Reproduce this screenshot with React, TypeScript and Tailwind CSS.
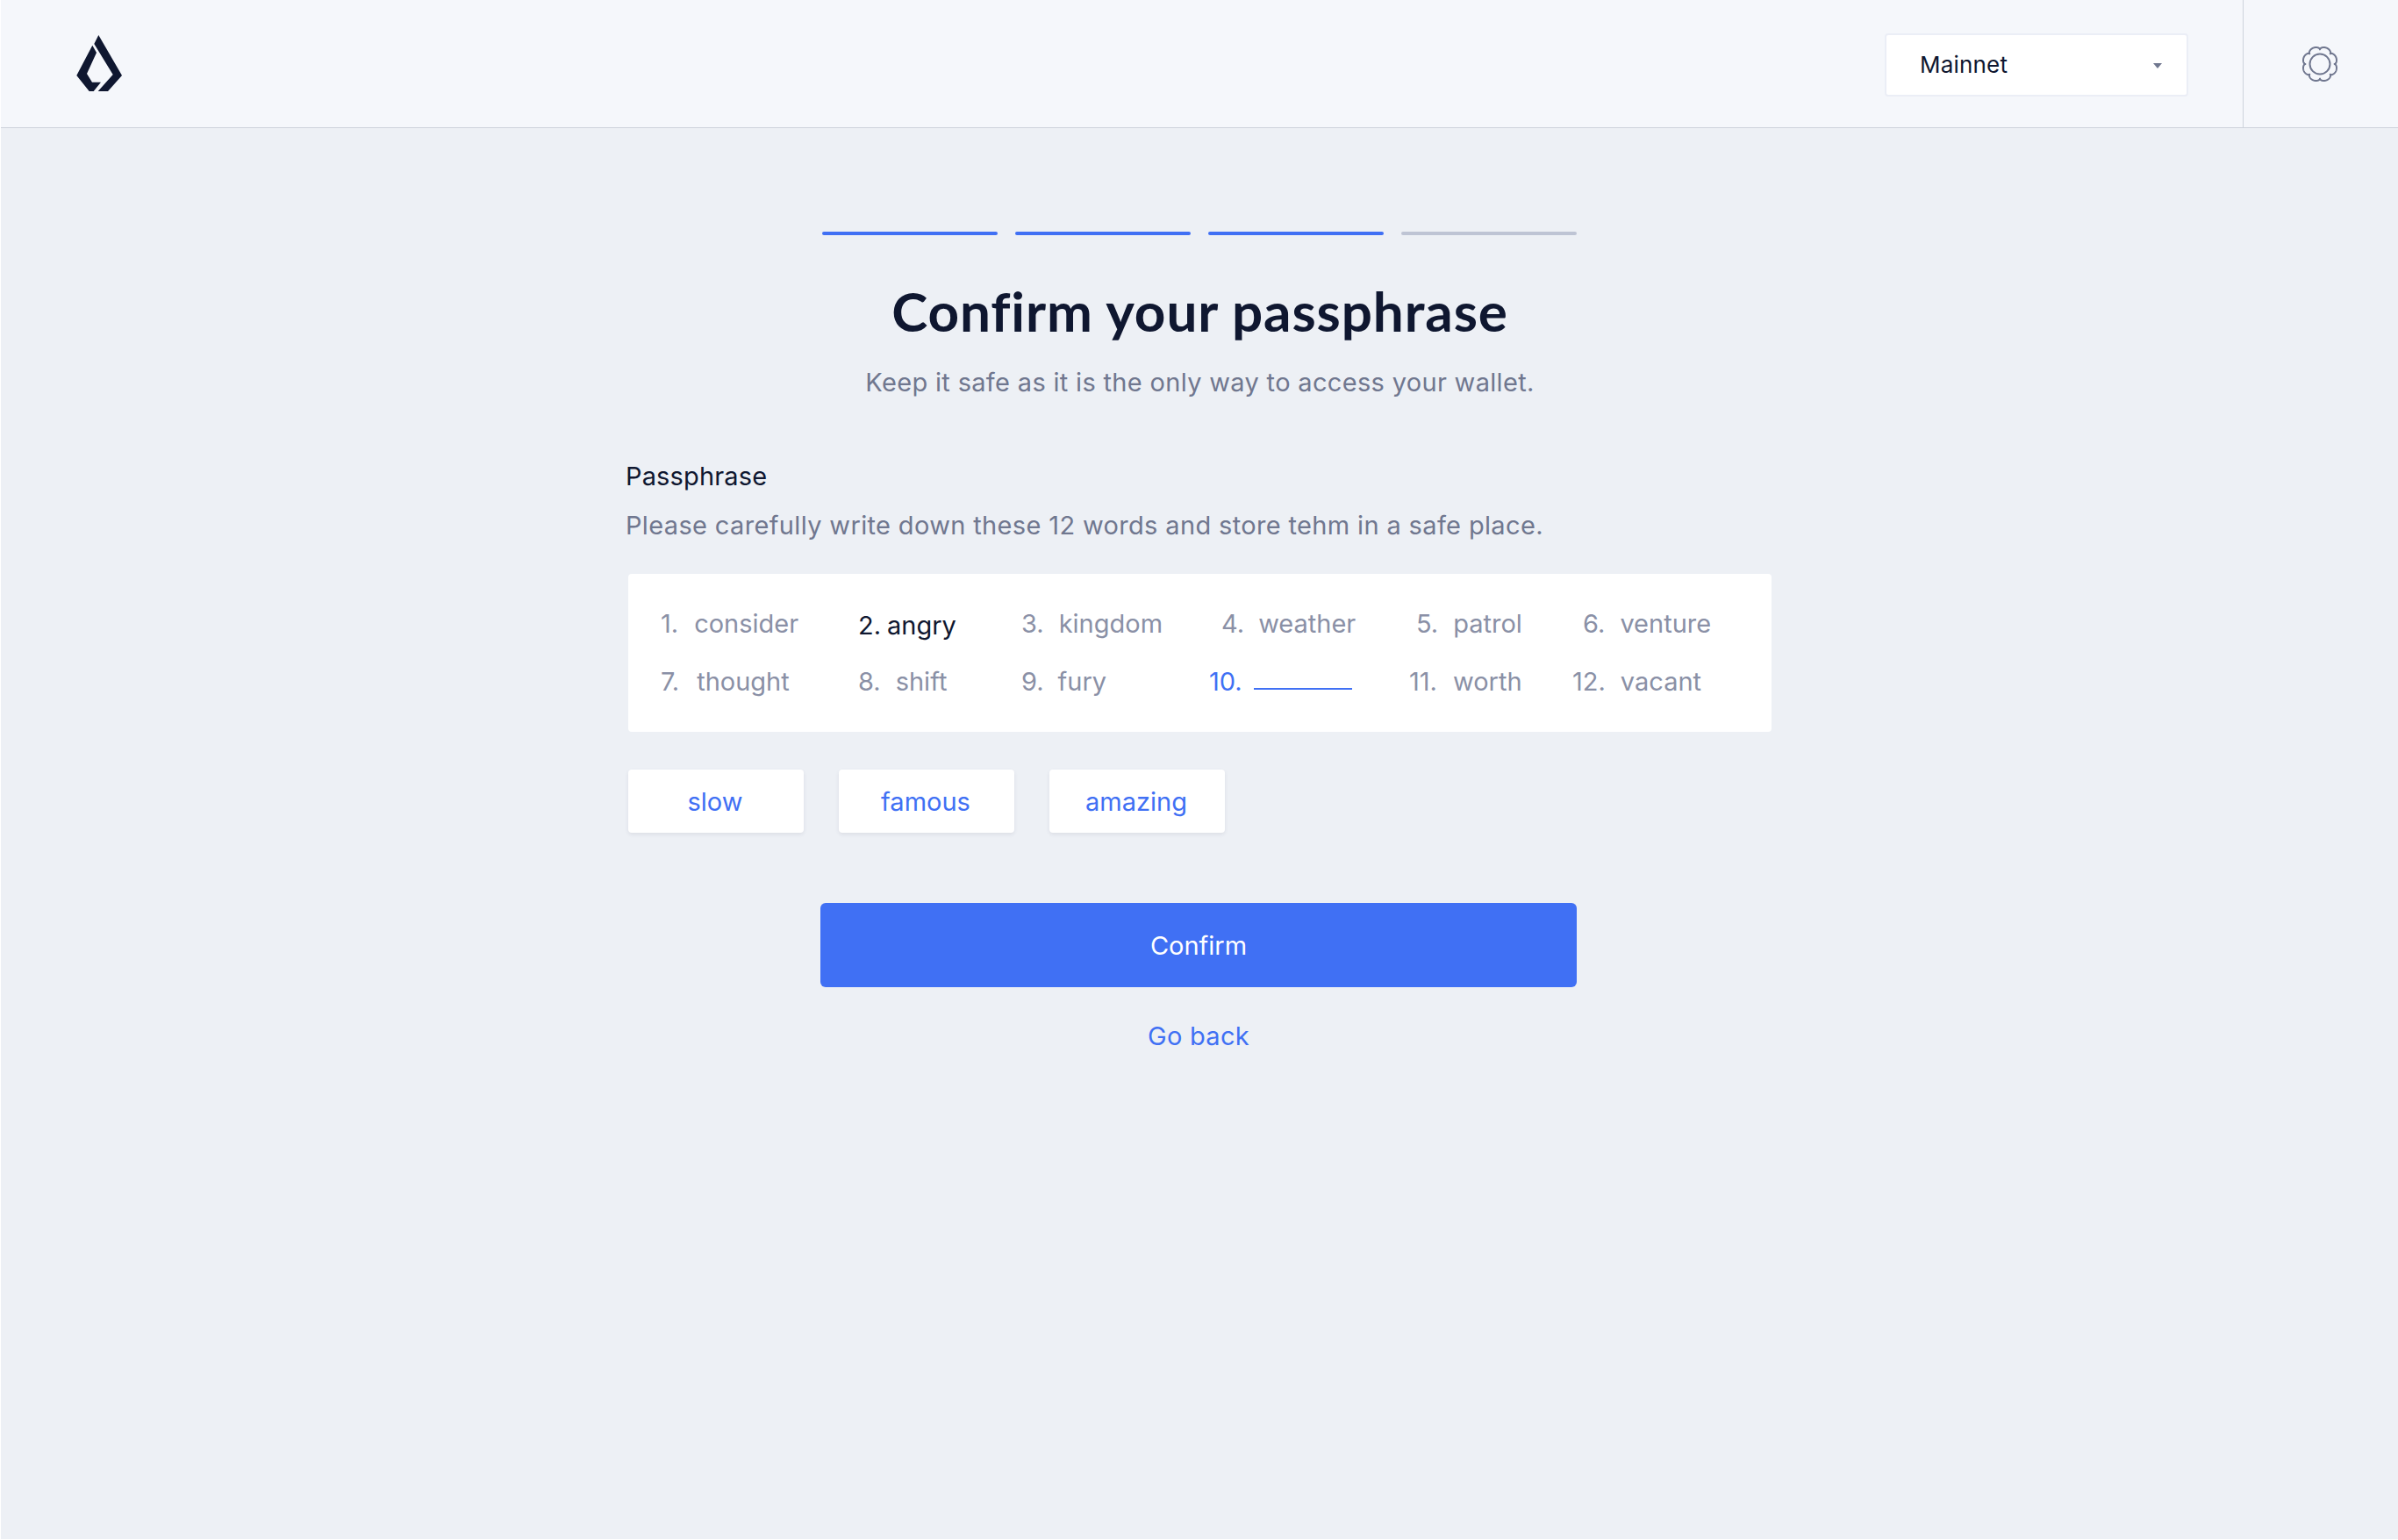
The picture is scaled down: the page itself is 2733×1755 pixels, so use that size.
const BODY = "font-['Inter','Liberation_Sans',sans-serif]";

const WORDS = [
  { n: "1.", w: "consider", cell: "", gap: "ml-[18px]" },
  { n: "2.", w: "angry", cell: "translate-y-[2px] text-[#0f1730]", gap: "ml-[7px]" },
  { n: "3.", w: "kingdom", cell: "", gap: "ml-[17px]" },
  { n: "4.", w: "weather", cell: "pl-[14px]", gap: "ml-[16px]" },
  { n: "5.", w: "patrol", cell: "pl-[8px]", gap: "ml-[17px]" },
  { n: "6.", w: "venture", cell: "pl-[12px]", gap: "ml-[17px]" },
  { n: "7.", w: "thought", cell: "", gap: "ml-[20px]" },
  { n: "8.", w: "shift", cell: "", gap: "ml-[17px]" },
  { n: "9.", w: "fury", cell: "", gap: "ml-[16px]" },
  { n: "10.", w: "", cell: "text-[#4070f4]", gap: "" },
  { n: "11.", w: "worth", cell: "", gap: "ml-[18px]" },
  { n: "12.", w: "vacant", cell: "", gap: "ml-[17px]" },
];

// scalloped outline, eight rounded lobes with a notch at the top
const GEAR_POINTS = Array.from({ length: 320 }, (_, i) => {
  const a = (i / 320) * Math.PI * 2;
  const r = 16.6 + 3.3 * Math.pow(Math.abs(Math.sin(4 * a)), 0.5);
  return `${(21 + r * Math.sin(a)).toFixed(2)},${(21 - r * Math.cos(a)).toFixed(2)}`;
}).join(" ");

function Logo() {
  return (
    <svg width="54" height="66" viewBox="86 38 54 66" className="block">
      <path fill="#0f1730" d="M112.3 39 139 85 123 103H111.7L128.7 84 107.3 49Z" />
      <path fill="#0f1730" d="M105.3 50.7 110 59 99 83 105 92.7H115L106.7 103H101.7L87.3 85Z" />
    </svg>
  );
}

function Gear() {
  return (
    <svg width="42" height="42" viewBox="0 0 42 42" fill="none" stroke="#70778f" strokeWidth="2" className="block">
      <polygon points={GEAR_POINTS} strokeLinejoin="round" />
      <circle cx="21" cy="21" r="11.5" />
    </svg>
  );
}

export default function App() {
  return (
    <div className={`${BODY} h-[1755px] w-full overflow-hidden bg-white pb-[1px] pl-[1px]`}>
      <div className="flex h-full flex-col bg-[#edf0f5]">
        <header className="flex h-[146px] shrink-0 items-center border-b border-[#ced3dc] bg-[#f5f7fb]">
          <div className="mb-[2px] ml-[85px]">
            <Logo />
          </div>
          <div className="ml-auto mt-[2px] flex h-[72px] w-[346px] items-center justify-between rounded-[4px] border-2 border-[#ebeef6] bg-white pl-[38px] pr-[28px] text-[26px] tracking-[0.2px] text-[#0f1730]">
            <span>Mainnet</span>
            <span className="mt-[2px] h-0 w-0 border-x-[5px] border-t-[6px] border-x-transparent border-t-[#70778f]" />
          </div>
          <div className="ml-[62px] flex h-full w-[177px] items-center justify-center border-l border-[#ced3dc] pr-[2px]">
            <Gear />
          </div>
        </header>

        <main className="flex flex-col items-center pt-[118px]">
          <div className="flex gap-[20px]">
            <div className="h-[4px] w-[200px] rounded-full bg-[#4070f4]" />
            <div className="h-[4px] w-[200px] rounded-full bg-[#4070f4]" />
            <div className="h-[4px] w-[200px] rounded-full bg-[#4070f4]" />
            <div className="h-[4px] w-[200px] rounded-full bg-[#bec4d4]" />
          </div>

          <h1 className="ml-[1px] mt-[50px] font-['Lato','Liberation_Sans',sans-serif] text-[62px] font-bold leading-[72px] tracking-[0.9px] text-[#0f1730]">
            Confirm your passphrase
          </h1>
          <p className="ml-[1px] mt-[26px] text-[29px] leading-[40px] tracking-[0.32px] text-[#70778f]">
            Keep it safe as it is the only way to access your wallet.
          </p>

          <section className="ml-[1px] mt-[67px] w-[1303px]">
            <div className="-ml-[3px] text-[29px] leading-[40px] tracking-[0.15px] text-[#0f1730]">Passphrase</div>
            <div className="-ml-[3px] mt-[16px] text-[29px] leading-[40px] tracking-[0.35px] text-[#70778f]">
              Please carefully write down these 12 words and store tehm in a safe place.
            </div>

            <div className="mt-[35px] grid h-[180px] grid-cols-[225px_186px_214px_228px_186px_1fr] content-center gap-y-[26px] rounded-[4px] bg-white pl-[37px] text-[29px] leading-[40px] text-[#8a90a6]">
              {WORDS.map((item) => (
                <div key={item.n} className={`flex items-center ${item.cell}`}>
                  <span>{item.n}</span>
                  {item.w ? (
                    <span className={item.gap}>{item.w}</span>
                  ) : (
                    <span className="ml-[13px] mt-[16px] h-[2px] w-[112px] bg-[#4070f4]" />
                  )}
                </div>
              ))}
            </div>

            <div className="mt-[43px] flex gap-[40px]">
              {["slow", "famous", "amazing"].map((word) => (
                <button
                  key={word}
                  type="button"
                  className="h-[72px] w-[200px] rounded-[4px] bg-white pr-[2px] pt-[2px] text-[29px] text-[#4070f4] shadow-[0_2px_4px_rgba(64,70,100,0.1)]"
                >
                  {word}
                </button>
              ))}
            </div>
          </section>

          <button
            type="button"
            className="-ml-[2px] mt-[80px] h-[96px] w-[862px] rounded-[6px] bg-[#4070f4] pt-[2px] text-[29px] text-white"
          >
            Confirm
          </button>
          <a className="-ml-[2px] mt-[36px] text-[29px] leading-[40px] tracking-[0.3px] text-[#4070f4]">Go back</a>
        </main>
      </div>
    </div>
  );
}
